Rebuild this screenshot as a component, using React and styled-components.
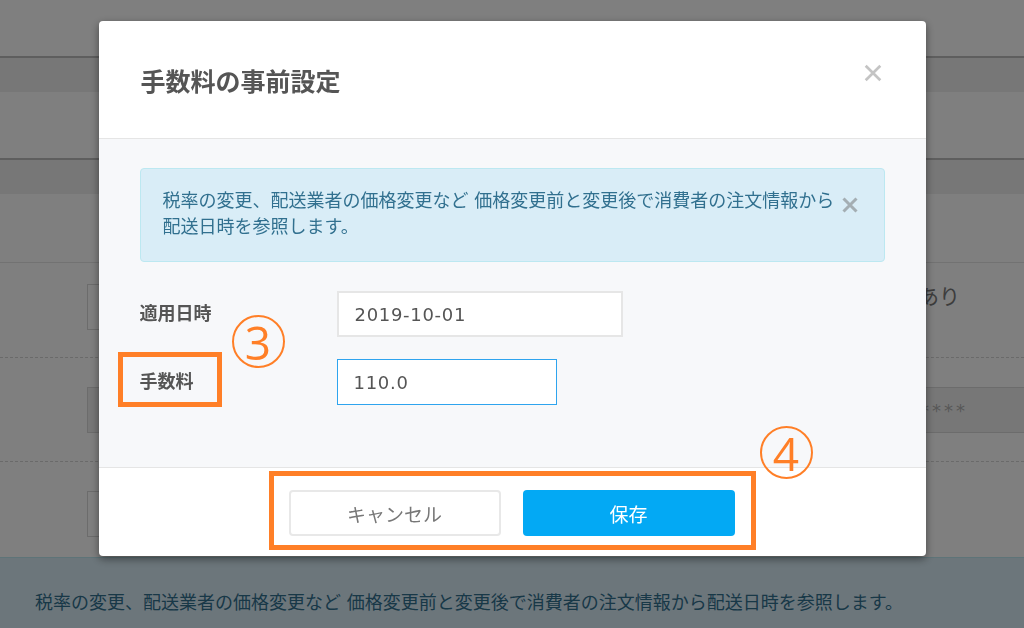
import React from 'react';
import styled, { createGlobalStyle, css } from 'styled-components';

const orange = '#ff7f27';

const GlobalStyle = createGlobalStyle`
  *,
  *::before,
  *::after {
    box-sizing: border-box;
  }
  html,
  body {
    margin: 0;
    padding: 0;
  }
  body {
    font-family: "DejaVu Sans", "Noto Sans CJK JP", sans-serif;
    color: #555;
    background: #fff;
    overflow: hidden;
  }
`;

// page behind the dialog

const Page = styled.div`
  min-height: 100vh;
  background: #fff;
`;

const TopBar = styled.div`
  height: 56px;
`;

const Band = styled.div`
  height: 36px;
  border-top: 2px solid #bdbdbd;
  background: #eee;
`;

const Spacer = styled.div`
  height: ${(props) => props.$h}px;
  border-bottom: ${(props) => (props.$line ? '1px solid #e4e4e4' : 'none')};
`;

const FormRow = styled.div`
  display: flex;
  align-items: flex-start;
  padding: 29px 0 28px 87px;
  border-bottom: 1px dashed #d4d4d4;

  &:first-child {
    padding-top: 21px;
    padding-bottom: 27px;
  }
  &:last-child {
    border-bottom: none;
    padding-bottom: 20px;
  }
`;

const Field = styled.div`
  height: 46px;
  border: 1px solid #d8d8d8;
  background: ${(props) => (props.$disabled ? '#eee' : '#fff')};
  display: flex;
  align-items: center;
  justify-content: flex-end;
  ${(props) =>
    props.$wide
      ? css`
          flex: 1;
          margin-right: -2px;
          padding-right: 57px;
        `
      : css`
          width: 300px;
        `}
`;

const Masked = styled.span`
  color: #b0b0b0;
  font-size: 18px;
  letter-spacing: 3px;
`;

const SideText = styled.span`
  margin-left: auto;
  margin-right: 64px;
  margin-top: 2px;
  font-size: 21px;
  line-height: 22px;
  color: #7a7a7a;
`;

const NoticeBar = styled.div`
  background: #d9edf7;
  border-top: 1px solid #bce8f1;
  color: #31708f;
  font-size: 18px;
  line-height: 26px;
  padding: 32px 35px 40px;
`;

// dialog

const Backdrop = styled.div`
  position: fixed;
  inset: 0;
  background: rgba(0, 0, 0, 0.5);
  display: flex;
  justify-content: center;
  align-items: flex-start;
  padding-top: 21px;
`;

const Dialog = styled.div`
  position: relative;
  width: 827px;
  background: #fff;
  border-radius: 4px;
  box-shadow: 0 3px 9px rgba(0, 0, 0, 0.45);
`;

const Header = styled.div`
  height: 118px;
  display: flex;
  align-items: center;
  justify-content: space-between;
  padding: 0 44px 0 42px;
  border-bottom: 1px solid #e5e5e5;
`;

const Title = styled.h4`
  margin: 0;
  font-family: "Noto Sans CJK JP", sans-serif;
  font-size: 25px;
  font-weight: 700;
  color: #555;
`;

const CloseButton = styled.button`
  border: none;
  background: none;
  padding: 0;
  cursor: pointer;
  display: flex;
  color: ${(props) => props.$color};
  align-self: flex-start;
  margin-top: ${(props) => props.$top}px;
`;

const Body = styled.div`
  background: #f7f8fa;
  padding: 29px 41px 62px;
`;

const Alert = styled.div`
  display: flex;
  align-items: flex-start;
  height: 94px;
  background: #d9edf7;
  border: 1px solid #bce8f1;
  border-radius: 4px;
  padding: 19px 26px 20px 22px;
  color: #31708f;
  font-size: 18px;
  line-height: 26px;
`;

const AlertText = styled.div`
  flex: 1;
  margin-right: 4px;
`;

const Form = styled.div`
  display: grid;
  grid-template-columns: 197px auto;
  row-gap: 22px;
  justify-items: start;
  margin-top: 29px;
`;

const Label = styled.label`
  position: relative;
  height: 46px;
  display: flex;
  align-items: center;
  padding-bottom: 4px;
  font-size: 18px;
  font-weight: 700;
  color: #555;

  ${(props) =>
    props.$highlight &&
    css`
      &::after {
        content: '';
        position: absolute;
        left: -22px;
        top: -7px;
        width: 104px;
        height: 55px;
        border: 5px solid ${orange};
      }
    `}
`;

const Input = styled.input`
  height: 46px;
  width: ${(props) => props.$width}px;
  border: 2px solid ${(props) => (props.$focused ? '#2ea4ee' : '#e6e6e6')};
  border-width: ${(props) => (props.$focused ? '1.5px' : '2px')};
  background: #fff;
  padding: 0 16px;
  font-family: "DejaVu Sans", sans-serif;
  font-size: 18px;
  letter-spacing: 0.7px;
  color: #555;
  outline: none;
`;

const Footer = styled.div`
  height: 89px;
  border-top: 1px solid #e5e5e5;
  display: flex;
  justify-content: center;
  align-items: flex-start;
  padding-top: 3px;
`;

const ButtonGroup = styled.div`
  display: flex;
  gap: 22px;
  border: 5px solid ${orange};
  padding: 14px 16px 9px 15px;
`;

const Button = styled.button`
  width: 212px;
  height: 46px;
  border-radius: 4px;
  font-family: "Noto Sans CJK JP", sans-serif;
  font-size: 19px;
  cursor: pointer;
  ${(props) =>
    props.$primary
      ? css`
          background: #03a9f4;
          border: none;
          color: #fff;
        `
      : css`
          background: #fff;
          border: 2px solid #e8e8e8;
          color: #777;
        `}
`;

const Marker = styled.span`
  position: absolute;
  left: ${(props) => props.$x}px;
  top: ${(props) => props.$y}px;
  width: 53px;
  height: 53px;
  border: 2px solid ${orange};
  border-radius: 50%;
  display: flex;
  align-items: center;
  justify-content: center;
  font-family: "Open Sans", sans-serif;
  font-size: 46px;
  line-height: 1;
  color: ${orange};
  z-index: 2;
`;

const CloseIcon = ({ size, weight }) => (
  <svg width={size} height={size} viewBox="0 0 16 16">
    <path d="M1.5 1.5L14.5 14.5M14.5 1.5L1.5 14.5" stroke="currentColor" strokeWidth={weight} />
  </svg>
);

const notice =
  '税率の変更、配送業者の価格変更など 価格変更前と変更後で消費者の注文情報から配送日時を参照します。';

export default function App() {
  return (
    <>
      <GlobalStyle />
      <Page>
        <TopBar />
        <Band />
        <Spacer $h={66} />
        <Band />
        <Spacer $h={69} $line />
        <div>
          <FormRow>
            <Field />
            <SideText>あり</SideText>
          </FormRow>
          <FormRow>
            <Field $wide $disabled>
              <Masked>************</Masked>
            </Field>
          </FormRow>
          <FormRow>
            <Field />
          </FormRow>
        </div>
        <NoticeBar>{notice}</NoticeBar>
      </Page>

      <Backdrop>
        <Dialog>
          <Header>
            <Title>手数料の事前設定</Title>
            <CloseButton $color="#c4c4c4" $top={43}>
              <CloseIcon size={18} weight={2.4} />
            </CloseButton>
          </Header>
          <Body>
            <Alert>
              <AlertText>{notice}</AlertText>
              <CloseButton $color="#a4aeb3" $top={9}>
                <CloseIcon size={16} weight={3} />
              </CloseButton>
            </Alert>
            <Form>
              <Label>適用日時</Label>
              <Input readOnly value="2019-10-01" $width={286} />
              <Label $highlight>手数料</Label>
              <Input readOnly value="110.0" $width={220} $focused />
            </Form>
          </Body>
          <Footer>
            <ButtonGroup>
              <Button>キャンセル</Button>
              <Button $primary>保存</Button>
            </ButtonGroup>
          </Footer>
          <Marker $x={133} $y={294}>3</Marker>
          <Marker $x={661} $y={405}>4</Marker>
        </Dialog>
      </Backdrop>
    </>
  );
}
